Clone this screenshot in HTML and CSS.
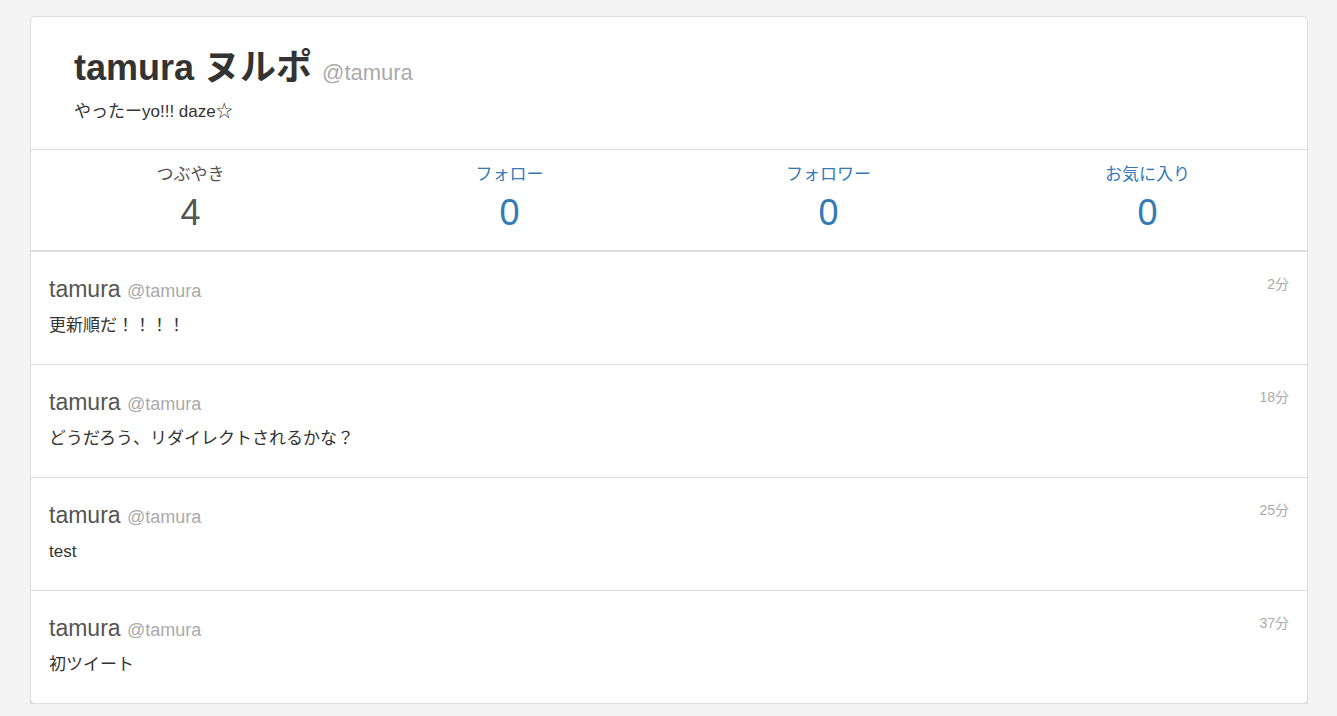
FILE: index.html
```html
<!DOCTYPE html>
<html lang="ja">
<head>
<meta charset="utf-8">
<link rel="stylesheet" href="styles.css">
</head>
<body>
<div class="card">
  <div class="profile">
    <h1 class="name">tamura ヌルポ <small>@tamura</small></h1>
    <p class="bio">やったーyo!!! daze☆</p>
  </div>
  <div class="stats">
    <div class="stat current"><div class="label">つぶやき</div><div class="num">4</div></div>
    <a class="stat"><div class="label">フォロー</div><div class="num">0</div></a>
    <a class="stat"><div class="label">フォロワー</div><div class="num">0</div></a>
    <a class="stat"><div class="label">お気に入り</div><div class="num">0</div></a>
  </div>
  <ul class="tweets">
    <li class="tweet">
      <div class="head"><span class="tname">tamura <small>@tamura</small></span><span class="time">2分</span></div>
      <p class="text">更新順だ！！！！</p>
    </li>
    <li class="tweet">
      <div class="head"><span class="tname">tamura <small>@tamura</small></span><span class="time">18分</span></div>
      <p class="text">どうだろう、リダイレクトされるかな？</p>
    </li>
    <li class="tweet">
      <div class="head"><span class="tname">tamura <small>@tamura</small></span><span class="time">25分</span></div>
      <p class="text">test</p>
    </li>
    <li class="tweet">
      <div class="head"><span class="tname">tamura <small>@tamura</small></span><span class="time">37分</span></div>
      <p class="text">初ツイート</p>
    </li>
  </ul>
</div>
</body>
</html>
```
FILE: styles.css
```css
html, body { margin: 0; padding: 0; }
body {
  background: #f4f4f4;
  font-family: "Liberation Sans", "Noto Sans CJK JP", sans-serif;
  color: #333;
  font-size: 16px;
  padding: 16px 29px 0 30px;
}
.card {
  background: #fff;
  border: 1px solid #ddd;
  border-radius: 5px;
  box-shadow: 0 3px 0 #dadada;
  overflow: hidden;
}
.profile {
  padding: 26px 44px 26px 43px;
  border-bottom: 1px solid #ddd;
}
.name {
  margin: 0;
  font-size: 36px;
  line-height: 50px;
  font-weight: bold;
  color: #333;
}
.name small {
  font-size: 22px;
  font-weight: normal;
  color: #aaa;
}
.bio {
  margin: 3px 0 0;
  font-size: 17px;
  line-height: 22px;
}
.stats {
  display: grid;
  grid-template-columns: repeat(4, 1fr);
  border-bottom: 2px solid #ddd;
  padding: 13px 0 15px;
}
.stat {
  text-align: center;
  color: #337ab7;
  text-decoration: none;
}
.stat.current { color: #555; }
.label { font-size: 17px; line-height: 24px; }
.num { font-size: 36px; line-height: 44px; margin-top: 4px; }
.tweets { list-style: none; margin: 0; padding: 0; }
.tweet {
  border-top: 1px solid #ddd;
  padding: 23px 18px 0 18px;
  height: 89px;
}
.tweet:first-child { border-top: none; }
.head {
  display: flex;
  justify-content: space-between;
  align-items: flex-start;
}
.tname { font-size: 23px; line-height: 28px; color: #555; }
.tname small { font-size: 18px; color: #aaa; }
.time { font-size: 14px; color: #aaa; line-height: 20px; margin-top: -1px; }
.text { margin: 10px 0 0; font-size: 17px; line-height: 22px; color: #333; }
```
